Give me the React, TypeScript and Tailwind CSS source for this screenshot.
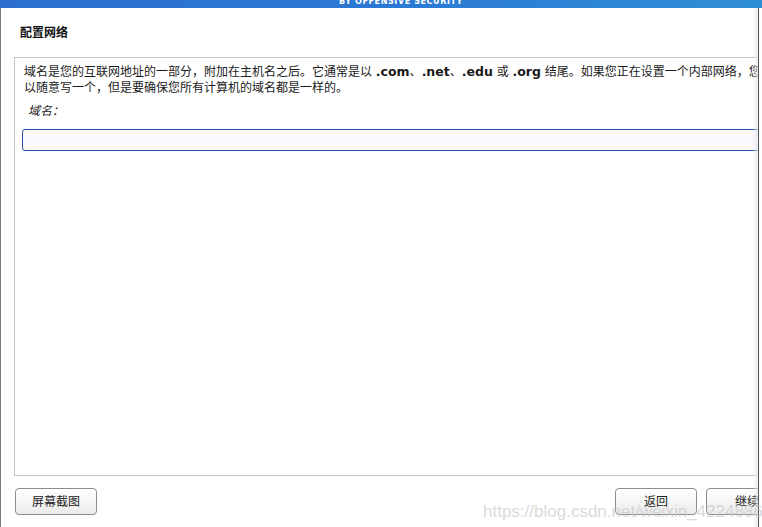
const font = 'font-["DejaVu_Sans","Noto_Sans_CJK_SC",sans-serif]';

function Btn({ label }: { label: string }) {
  return (
    <button className="h-[27px] w-[82px] shrink-0 rounded-[4px] border border-[#8c8c8c] bg-gradient-to-b from-white to-[#ebebeb] text-[12px] text-[#222]">
      {label}
    </button>
  );
}

export default function App() {
  return (
    <div className={`relative h-[527px] w-[762px] overflow-hidden bg-white ${font}`}>
      <div className="flex h-[8px] justify-center overflow-hidden bg-gradient-to-r from-[#2c6fcf] via-[#2b78d4] to-[#2f8fd6] pl-[40px]">
        <span className="-mt-[4px] text-[8px] font-bold leading-[12px] tracking-[0.6px] text-white">
          BY OFFENSIVE SECURITY
        </span>
      </div>
      <div className="flex h-[519px]">
        <div className="w-px shrink-0 bg-[#7a7a7a]" />
        <div className="relative flex w-[757px] shrink-0 flex-col overflow-hidden">
          <div className="flex h-[49px] shrink-0 items-center pl-[19px] text-[12px] font-bold text-[#111]">
            配置网络
          </div>
          <div className="ml-[13px] h-[419px] w-[800px] shrink-0 border border-[#c6c6c6] pl-[9px] pt-[6px]">
            <p className="whitespace-nowrap text-[12px] leading-[16px] text-[#1a1a1a]">
              域名是您的互联网地址的一部分，附加在主机名之后。它通常是以 <b className="text-[12.5px]">.com</b>、<b className="text-[12.5px]">.net</b>、<b className="text-[12.5px]">.edu</b> 或 <b className="text-[12.5px]">.org</b> 结尾。如果您正在设置一个内部网络，您可
            </p>
            <p className="whitespace-nowrap text-[12px] leading-[16px] text-[#1a1a1a]">
              以随意写一个，但是要确保您所有计算机的域名都是一样的。
            </p>
            <p className="mt-[7px] pl-[4px] text-[12px] italic leading-[16px] text-[#1a1a1a]">域名：</p>
            <input className="mt-[10px] -ml-[2px] h-[22px] w-[780px] rounded-[3px] border-[1.5px] border-[#2350a6] bg-[#fbf8fe] px-1 text-[12px] outline-none" />
          </div>
          <div className="flex flex-1 items-center pl-[14px]">
            <Btn label="屏幕截图" />
            <div className="-mr-[30px] ml-auto flex gap-[9px]">
              <Btn label="返回" />
              <Btn label="继续" />
            </div>
          </div>
          <div className="pointer-events-none absolute inset-y-0 right-0 w-[6px] bg-gradient-to-r from-transparent to-[#e6e6e6]/70" />
        </div>
        <div className="w-px shrink-0 bg-[#555]" />
        <div className="w-[3px] shrink-0 bg-white" />
      </div>
      <span className="pointer-events-none absolute left-[483px] top-[499px] whitespace-nowrap font-['Liberation_Sans',sans-serif] text-[17px] text-[#c9c9c9]/70">
        https://blog.csdn.net/weixin_42248863
      </span>
    </div>
  );
}
